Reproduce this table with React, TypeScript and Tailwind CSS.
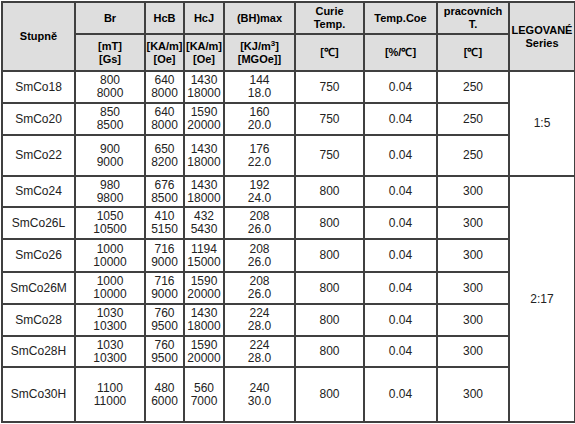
import React from 'react'

const rows: [string, string, string, string, string, string, string, string, string, string, string, string, number][] = [
  ['SmCo18', '800', '8000', '640', '8000', '1430', '18000', '144', '18.0', '750', '0.04', '250', 32],
  ['SmCo20', '850', '8500', '640', '8000', '1590', '20000', '160', '20.0', '750', '0.04', '250', 32],
  ['SmCo22', '900', '9000', '650', '8200', '1430', '18000', '176', '22.0', '750', '0.04', '250', 41],
  ['SmCo24', '980', '9800', '676', '8500', '1430', '18000', '192', '24.0', '800', '0.04', '300', 31],
  ['SmCo26L', '1050', '10500', '410', '5150', '432', '5430', '208', '26.0', '800', '0.04', '300', 32],
  ['SmCo26', '1000', '10000', '716', '9000', '1194', '15000', '208', '26.0', '800', '0.04', '300', 33],
  ['SmCo26M', '1000', '10000', '716', '9000', '1590', '20000', '208', '26.0', '800', '0.04', '300', 32],
  ['SmCo28', '1030', '10300', '760', '9500', '1430', '18000', '224', '28.0', '800', '0.04', '300', 32],
  ['SmCo28H', '1030', '10300', '760', '9500', '1590', '20000', '224', '28.0', '800', '0.04', '300', 31],
  ['SmCo30H', '1100', '11000', '480', '6000', '560', '7000', '240', '30.0', '800', '0.04', '300', 55],
]

const widths = [73, 70, 39, 40, 71, 69, 73, 72, 66]

const th = 'border-2 border-[#404040] bg-[#dedede] p-0 text-center align-middle font-bold text-[11px] leading-[13px] text-black'
const td = 'border-2 border-[#404040] bg-white p-0 text-center align-middle text-[12px] leading-[13px] text-[#222]'

function Two({ a, b }: { a: string; b: string }) {
  return (
    <>
      {a}
      <br />
      {b}
    </>
  )
}

export default function App() {
  return (
    <div className="bg-white w-[575px] h-[424px] pl-px pt-px" style={{ fontFamily: '"Liberation Sans", Arial, sans-serif' }}>
      <table className="table-fixed border-collapse w-[574px]">
        <colgroup>
          {widths.map((w, i) => (
            <col key={i} style={{ width: w }} />
          ))}
        </colgroup>
        <thead>
          <tr className="h-[32px]">
            <th rowSpan={2} className={th}>Stupně</th>
            <th className={th}>Br</th>
            <th className={th}>HcB</th>
            <th className={th}>HcJ</th>
            <th className={th}>(BH)max</th>
            <th className={th}><Two a="Curie" b="Temp." /></th>
            <th className={th}>Temp.Coe</th>
            <th className={th}><Two a="pracovních" b="T." /></th>
            <th rowSpan={2} className={th}><Two a="LEGOVANÉ" b="Series" /></th>
          </tr>
          <tr className="h-[37px]">
            <th className={th}><Two a="[mT]" b="[Gs]" /></th>
            <th className={th}><Two a="[KA/m]" b="[Oe]" /></th>
            <th className={th}><Two a="[KA/m]" b="[Oe]" /></th>
            <th className={th}>
              [KJ/m<sup className="text-[8px]">3</sup>]
              <br />
              [MGOe]]
            </th>
            <th className={th}>[℃]</th>
            <th className={th}>[%/℃]</th>
            <th className={th}>[℃]</th>
          </tr>
        </thead>
        <tbody>
          {rows.map((r, i) => (
            <tr key={r[0]} style={{ height: r[12] }}>
              <td className={td}>{r[0]}</td>
              <td className={td}><Two a={r[1]} b={r[2]} /></td>
              <td className={td}><Two a={r[3]} b={r[4]} /></td>
              <td className={td}><Two a={r[5]} b={r[6]} /></td>
              <td className={td}><Two a={r[7]} b={r[8]} /></td>
              <td className={td}>{r[9]}</td>
              <td className={td}>{r[10]}</td>
              <td className={td}>{r[11]}</td>
              {i === 0 && <td rowSpan={3} className={td}>1:5</td>}
              {i === 3 && <td rowSpan={7} className={td}>2:17</td>}
            </tr>
          ))}
        </tbody>
      </table>
    </div>
  )
}
